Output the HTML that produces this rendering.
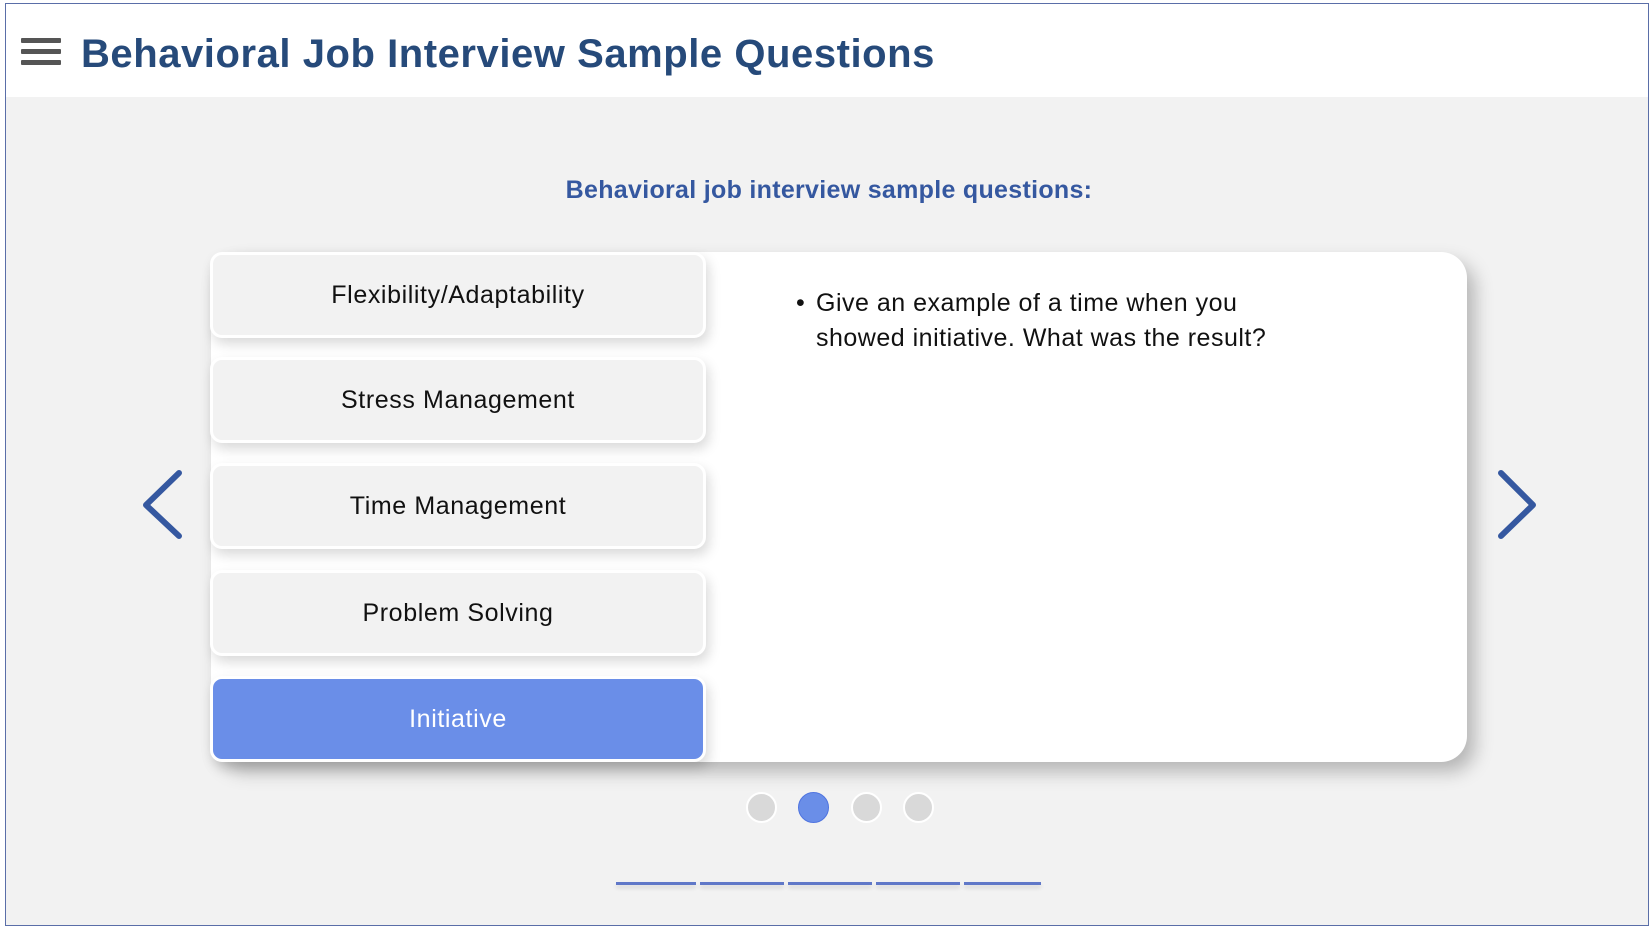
<!DOCTYPE html>
<html><head><meta charset="utf-8"><style>
*{margin:0;padding:0;box-sizing:border-box}
body{width:1651px;height:930px;background:#fff;position:relative;overflow:hidden;font-family:"Liberation Sans",sans-serif}
.frame{position:absolute;left:5px;top:3px;width:1644px;height:923px;border:1px solid #5a6ea8;background:#f2f2f2}
.hdr{position:absolute;left:0;top:0;width:100%;height:93px;background:#fff}
.ham{position:absolute;left:15px;top:34px;width:40px}
.ham i{display:block;height:5px;background:#555;margin-bottom:6px;border-radius:1px}
h1{position:absolute;left:75px;top:28px;font-size:40px;font-weight:bold;color:#264a7a;letter-spacing:0.55px;white-space:nowrap}
.sub{position:absolute;left:0;width:1644px;top:172px;text-align:center;font-size:25px;font-weight:bold;color:#3558a0;padding-left:2px;letter-spacing:0.3px}
.card{position:absolute;left:205px;top:248px;width:1256px;height:510px;background:#fff;border-radius:26px;box-shadow:8px 10px 18px rgba(0,0,0,0.25)}
.tab{position:absolute;left:204px;width:496px;height:86px;background:#f2f2f2;border:3px solid #fff;border-radius:12px;box-shadow:3px 6px 12px rgba(0,0,0,0.15);text-align:center;line-height:80px;font-size:25px;letter-spacing:0.6px;color:#111}
.tab.act{background:#6a8ee8;color:#fff}
.txt{position:absolute;left:810px;top:282px;font-size:25px;line-height:35px;color:#111;width:480px;letter-spacing:0.5px}
.txt b{position:absolute;left:-20px;top:0;font-weight:normal}
.dot{position:absolute;top:788px;width:31px;height:31px;border-radius:50%;background:#d9d9d9;border:2px solid #fff}
.dot.a{background:#6a8ee8;border:1px solid #4f74e0}
.ln{position:absolute;top:878px;height:3px;background:#6078c8;box-shadow:0 3px 4px rgba(0,0,0,0.12)}
</style></head><body>
<div class="frame">
<div class="hdr"><div class="ham"><i></i><i></i><i></i></div>
<h1>Behavioral Job Interview Sample Questions</h1></div>
<div class="sub">Behavioral job interview sample questions:</div>
<div class="card"></div>
<div class="tab" style="top:248px">Flexibility/Adaptability</div>
<div class="tab" style="top:353px">Stress Management</div>
<div class="tab" style="top:459px">Time Management</div>
<div class="tab" style="top:566px">Problem Solving</div>
<div class="tab act" style="top:672px">Initiative</div>
<div class="txt"><b>•</b>Give an example of a time when you showed initiative. What was the result?</div>
<svg style="position:absolute;left:133px;top:465px" width="50" height="75"><path d="M40 4 L7 36 L40 67" fill="none" stroke="#3558a0" stroke-width="6" stroke-linecap="round" stroke-linejoin="round"/></svg>
<svg style="position:absolute;left:1487px;top:465px" width="50" height="75"><path d="M8 4 L40 36 L8 67" fill="none" stroke="#3558a0" stroke-width="6" stroke-linecap="round" stroke-linejoin="round"/></svg>
<div class="dot" style="left:740px"></div>
<div class="dot a" style="left:792px"></div>
<div class="dot" style="left:845px"></div>
<div class="dot" style="left:897px"></div>
<div class="ln" style="left:610px;width:80px"></div>
<div class="ln" style="left:694px;width:84px"></div>
<div class="ln" style="left:782px;width:84px"></div>
<div class="ln" style="left:870px;width:84px"></div>
<div class="ln" style="left:958px;width:77px"></div>
</div>
</body></html>
